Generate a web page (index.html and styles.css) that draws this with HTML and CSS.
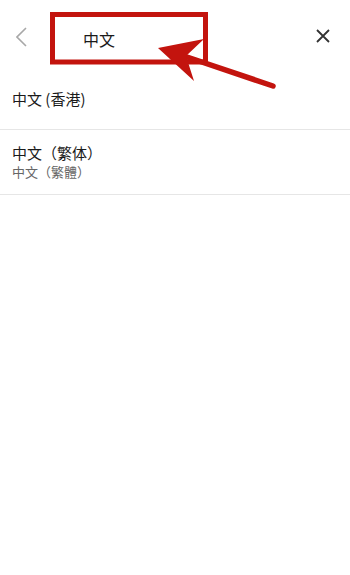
FILE: index.html
```html
<!DOCTYPE html>
<html lang="zh">
<head>
    <meta charset="UTF-8">
    <meta name="viewport" content="width=device-width, initial-scale=1.0">
    <title>语言</title>
    <link rel="stylesheet" href="styles.css">
</head>
<body>
    <div class="page">
        <div class="header">
            <svg class="back" width="12" height="20" viewBox="0 0 12 20">
                <polyline points="10,1 1,10 10,19" fill="none" stroke="#a8a8a8" stroke-width="1.6"/>
            </svg>
            <div class="search">中文</div>
            <svg class="close" width="14" height="14" viewBox="0 0 14 14">
                <path d="M1 1 L13 13 M13 1 L1 13" stroke="#333" stroke-width="1.8" fill="none"/>
            </svg>
        </div>
        <div class="row">
            <div class="name">中文 (香港)</div>
        </div>
        <div class="row two">
            <div class="name">中文（繁体）</div>
            <div class="sub">中文（繁體）</div>
        </div>

        <svg class="mark" width="350" height="110" viewBox="0 0 350 110">
            <rect x="52.5" y="14.5" width="153" height="47.5" fill="none" stroke="#c3140e" stroke-width="5"/>
            <line x1="184" y1="56" x2="273" y2="86" stroke="#c3140e" stroke-width="5.5" stroke-linecap="round"/>
            <polygon points="158,48 204,39 186,56 194,81" fill="#c3140e"/>
        </svg>
    </div>
</body>
</html>
```

FILE: styles.css
```css
body {
    margin: 0;
    padding: 0;
    background: #fff;
    font-family: "Noto Sans CJK SC", "Noto Sans", sans-serif;
    color: #1a1a1a;
}
.page {
    position: relative;
    width: 350px;
    height: 575px;
    background: #fff;
}
.header {
    display: flex;
    align-items: center;
    height: 54px;
    padding: 10px 20px 0 16px;
}
.back {
    display: block;
}
.search {
    flex: 1;
    margin-left: 55px;
    font-size: 16px;
    line-height: 20px;
    color: #1a1a1a;
    padding-top: 4px;
}
.close {
    display: block;
    margin-top: -2px;
}
.row {
    padding: 25px 12px 20px;
    border-bottom: 1px solid #e6e6e6;
}
.row.two {
    padding: 14px 12px 14px;
}
.name {
    font-size: 15px;
    line-height: 20px;
    color: #1a1a1a;
}
.row.two .name {
    line-height: 18px;
}
.sub {
    margin-top: 2px;
    font-size: 13px;
    line-height: 16px;
    color: #666;
}
.mark {
    position: absolute;
    top: 0;
    left: 0;
    pointer-events: none;
}
```
